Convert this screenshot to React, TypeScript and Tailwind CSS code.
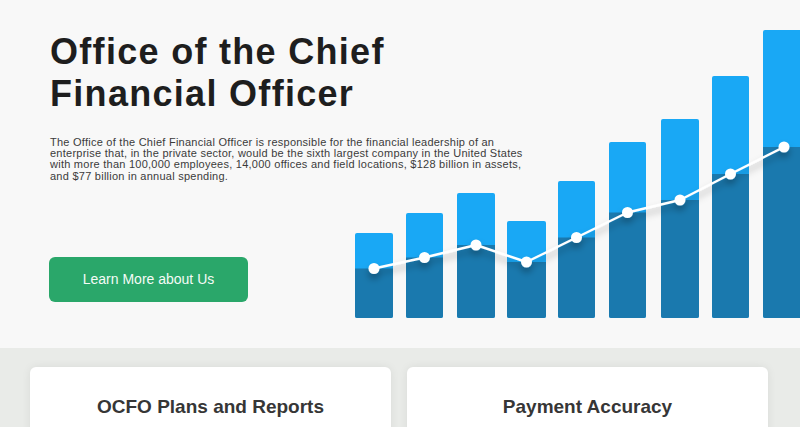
import React from 'react';

const BAR_BOTTOM = 318;

const BARS = [
    { x: 355, w: 38, top: 233, y: 268.5 },
    { x: 406, w: 37, top: 213, y: 257.5 },
    { x: 457, w: 38, top: 193, y: 245 },
    { x: 507, w: 39, top: 221, y: 262 },
    { x: 558, w: 37, top: 181, y: 237.5 },
    { x: 609, w: 37, top: 142, y: 212.5 },
    { x: 661, w: 38, top: 119, y: 200 },
    { x: 712, w: 37, top: 76, y: 174 },
    { x: 763, w: 42, top: 30, y: 147 },
];

const CARDS = ['OCFO Plans and Reports', 'Payment Accuracy'];

function GrowthChart() {
    const points = BARS.map((b) => `${b.x + b.w / 2},${b.y}`).join(' ');
    return (
        <svg className="absolute left-[340px] top-0" width={460} height={348} viewBox="340 0 460 348">
            <defs>
                <filter id="lineShadow" x="-10%" y="-50%" width="120%" height="200%">
                    <feDropShadow dx="0" dy="5" stdDeviation="3.5" floodColor="#000" floodOpacity="0.3" />
                </filter>
                {BARS.map((b, i) => (
                    <clipPath key={i} id={`bar${i}`}>
                        <rect x={b.x} y={b.top} width={b.w} height={BAR_BOTTOM - b.top} rx={2} />
                    </clipPath>
                ))}
            </defs>
            {BARS.map((b, i) => (
                <g key={i} clipPath={`url(#bar${i})`}>
                    <rect x={b.x} y={b.top} width={b.w} height={BAR_BOTTOM - b.top} fill="#19a8f5" />
                    <rect x={b.x} y={b.y} width={b.w} height={BAR_BOTTOM - b.y} fill="#1a79ae" />
                </g>
            ))}
            <g filter="url(#lineShadow)">
                <polyline points={points} fill="none" stroke="#fff" strokeWidth={2.5} strokeLinejoin="round" />
                {BARS.map((b, i) => (
                    <circle key={i} cx={b.x + b.w / 2} cy={b.y} r={5.5} fill="#fff" />
                ))}
            </g>
        </svg>
    );
}

export default function App() {
    return (
        <div className="w-[800px] h-[427px] overflow-hidden bg-[#e9ebe8] font-['Liberation_Sans',Arial,sans-serif]">
            {/* Hero */}
            <section className="relative h-[348px] bg-[#f8f8f8]">
                <GrowthChart />
                <div className="relative pl-[50px] pt-[31px]">
                    <h1 className="text-[36px] leading-[42px] font-bold tracking-[1.3px] text-[#1e1e1e]">
                        Office of the Chief
                        <br />
                        Financial Officer
                    </h1>
                    <p className="mt-[22px] w-[478px] text-[11px] leading-[11.2px] tracking-[0.25px] text-[#3b3b3b]">
                        The Office of the Chief Financial Officer is responsible for the financial leadership of an enterprise that, in the private sector, would be the sixth largest company in the United States with more than 100,000 employees, 14,000 offices and field locations, $128 billion in assets, and $77 billion in annual spending.
                    </p>
                    <button className="mt-[75px] -ml-px w-[199px] h-[45px] rounded-[6px] bg-[#2aa76a] text-[14px] text-[#f4fbf6]">
                        Learn More about Us
                    </button>
                </div>
            </section>

            {/* Cards */}
            <section className="grid grid-cols-2 gap-4 pl-[30px] pr-[32px] pt-[19px]">
                {CARDS.map((title) => (
                    <div key={title} className="h-[150px] rounded-[6px] bg-white pt-[28px] shadow-[0_0_10px_rgba(0,0,0,0.07)]">
                        <h2 className="text-center text-[19px] leading-[24px] font-bold text-[#363636]">{title}</h2>
                    </div>
                ))}
            </section>
        </div>
    );
}
